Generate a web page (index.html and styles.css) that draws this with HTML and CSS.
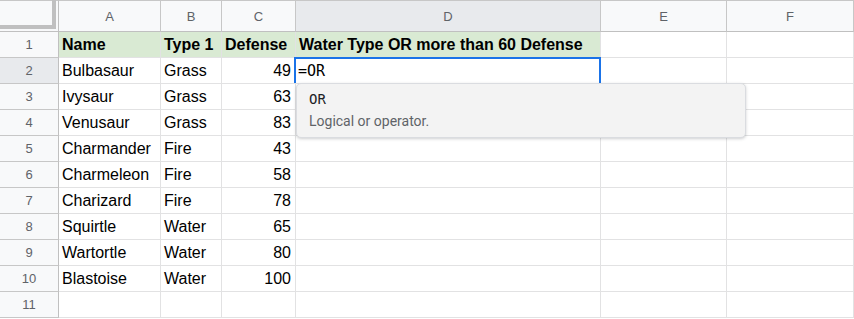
FILE: index.html
```html
<!DOCTYPE html>
<html lang="en">
<head>
    <meta charset="UTF-8">
    <meta name="viewport" content="width=device-width, initial-scale=1.0">
    <title>Pokemon Sheet</title>
    <link rel="stylesheet" href="styles.css">
</head>
<body>
    <div class="sheet">
        <div class="grid">
            <!-- column headers -->
            <div class="corner"><div class="corner-bar"></div></div>
            <div class="col-head">A</div>
            <div class="col-head">B</div>
            <div class="col-head">C</div>
            <div class="col-head selected">D</div>
            <div class="col-head">E</div>
            <div class="col-head">F</div>

            <div class="row-head">1</div>
            <div class="cell title">Name</div>
            <div class="cell title">Type 1</div>
            <div class="cell title">Defense</div>
            <div class="cell title">Water Type OR more than 60 Defense</div>
            <div class="cell"></div>
            <div class="cell"></div>

            <div class="row-head selected">2</div>
            <div class="cell">Bulbasaur</div>
            <div class="cell">Grass</div>
            <div class="cell num">49</div>
            <div class="cell active"><span class="formula">=OR</span></div>
            <div class="cell"></div>
            <div class="cell"></div>

            <div class="row-head">3</div>
            <div class="cell">Ivysaur</div>
            <div class="cell">Grass</div>
            <div class="cell num">63</div>
            <div class="cell"></div>
            <div class="cell"></div>
            <div class="cell"></div>

            <div class="row-head">4</div>
            <div class="cell">Venusaur</div>
            <div class="cell">Grass</div>
            <div class="cell num">83</div>
            <div class="cell"></div>
            <div class="cell"></div>
            <div class="cell"></div>

            <div class="row-head">5</div>
            <div class="cell">Charmander</div>
            <div class="cell">Fire</div>
            <div class="cell num">43</div>
            <div class="cell"></div>
            <div class="cell"></div>
            <div class="cell"></div>

            <div class="row-head">6</div>
            <div class="cell">Charmeleon</div>
            <div class="cell">Fire</div>
            <div class="cell num">58</div>
            <div class="cell"></div>
            <div class="cell"></div>
            <div class="cell"></div>

            <div class="row-head">7</div>
            <div class="cell">Charizard</div>
            <div class="cell">Fire</div>
            <div class="cell num">78</div>
            <div class="cell"></div>
            <div class="cell"></div>
            <div class="cell"></div>

            <div class="row-head">8</div>
            <div class="cell">Squirtle</div>
            <div class="cell">Water</div>
            <div class="cell num">65</div>
            <div class="cell"></div>
            <div class="cell"></div>
            <div class="cell"></div>

            <div class="row-head">9</div>
            <div class="cell">Wartortle</div>
            <div class="cell">Water</div>
            <div class="cell num">80</div>
            <div class="cell"></div>
            <div class="cell"></div>
            <div class="cell"></div>

            <div class="row-head">10</div>
            <div class="cell">Blastoise</div>
            <div class="cell">Water</div>
            <div class="cell num">100</div>
            <div class="cell"></div>
            <div class="cell"></div>
            <div class="cell"></div>

            <div class="row-head">11</div>
            <div class="cell"></div>
            <div class="cell"></div>
            <div class="cell"></div>
            <div class="cell"></div>
            <div class="cell"></div>
            <div class="cell"></div>
        </div>

        <!-- formula autocomplete popup -->
        <div class="suggest">
            <div class="suggest-name">OR</div>
            <div class="suggest-desc">Logical or operator.</div>
        </div>
    </div>
</body>
</html>
```

FILE: styles.css
```css
body {
    margin: 0;
    background: #fff;
    overflow: hidden;
    font-family: 'Liberation Sans', Arial, sans-serif;
}
.sheet {
    position: relative;
    width: 854px;
}
.grid {
    display: grid;
    grid-template-columns: 59px 102px 61px 74px 305px 126px 127px;
    grid-template-rows: 32px repeat(11, 26px);
}
.corner,
.col-head,
.row-head,
.cell {
    box-sizing: border-box;
    border-right: 1px solid #e2e2e3;
    border-bottom: 1px solid #e2e2e3;
}
.corner {
    background: #f8f9fa;
    border-top: 1px solid #c7c7c7;
    border-right-color: #c0c0c0;
    border-bottom-color: #c0c0c0;
}
.corner-bar {
    width: 56px;
    height: 29px;
    box-sizing: border-box;
    border-right: 4px solid #c0c0c0;
    border-bottom: 4px solid #c0c0c0;
    margin-top: -1px;
}
.col-head {
    display: flex;
    align-items: center;
    justify-content: center;
    background: #f8f9fa;
    border-top: 1px solid #c7c7c7;
    border-right-color: #c7c7c7;
    border-bottom-color: #c0c0c0;
    color: #5f6368;
    font-size: 13px;
    padding-top: 1px;
}
.row-head {
    display: flex;
    align-items: center;
    justify-content: center;
    background: #f8f9fa;
    border-right-color: #c0c0c0;
    border-bottom-color: #c7c7c7;
    color: #5f6368;
    font-size: 13px;
}
.selected {
    background: #e8eaed;
}
.cell {
    display: flex;
    align-items: center;
    padding: 0 3px 0 3px;
    font-size: 16px;
    color: #000;
    white-space: nowrap;
    overflow: hidden;
}
.title {
    background: #d9ead3;
    font-weight: bold;
}
.num {
    justify-content: flex-end;
    padding-right: 4px;
}
.active {
    position: relative;
    overflow: visible;
    padding-left: 2px;
}
.active::after {
    content: '';
    position: absolute;
    top: -1px;
    left: -2px;
    right: -1px;
    bottom: 0;
    border: 2px solid #1a73e8;
    border-bottom: 0;
}
.formula {
    font-family: 'DejaVu Sans Mono', monospace;
    font-size: 15px;
    color: #000;
}
.suggest {
    position: absolute;
    top: 83px;
    left: 296px;
    width: 450px;
    height: 55px;
    box-sizing: border-box;
    padding: 6px 12px 0 12px;
    background: #f3f3f3;
    border: 1px solid #dadce0;
    border-radius: 5px;
    box-shadow: 0 1px 3px rgba(60, 64, 67, 0.25);
}
.suggest-name {
    font-family: 'DejaVu Sans Mono', monospace;
    font-size: 14px;
    color: #202124;
    line-height: 18px;
}
.suggest-desc {
    font-family: Roboto, 'Liberation Sans', sans-serif;
    font-size: 14px;
    color: #5f6368;
    margin-top: 4px;
    line-height: 18px;
}
```
